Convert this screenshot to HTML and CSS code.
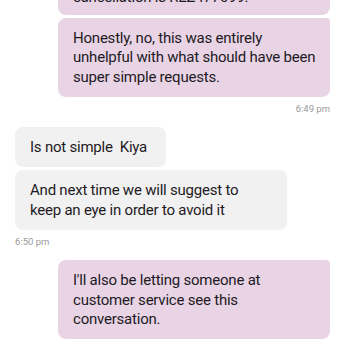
FILE: index.html
```html
<!DOCTYPE html>
<html>
<head>
<meta charset="utf-8">
<link rel="stylesheet" href="styles.css">
</head>
<body>
<div class="chat">
  <div class="msg sent first">Thanks, your reference for the cancellation is REZ477099.</div>
  <div class="msg sent next">Honestly, no, this was entirely unhelpful with what should have been super simple requests.</div>
  <div class="time right">6:49 pm</div>
  <div class="msg recv">Is not simple&nbsp; Kiya&nbsp;</div>
  <div class="msg recv">And next time we will suggest to keep an eye in order to avoid it</div>
  <div class="time left">6:50 pm</div>
  <div class="msg sent lone">I'll also be letting someone at customer service see this conversation.</div>
</div>
</body>
</html>
```
FILE: styles.css
```css
html, body {
  margin: 0;
  padding: 0;
  background: #ffffff;
  overflow: hidden;
}
body {
  width: 348px;
  height: 348px;
  font-family: Roboto, "Noto Sans", sans-serif;
  color: #1e1b1f;
}
.chat {
  display: flex;
  flex-direction: column;
  gap: 3px;
  margin-top: -42px;
  padding: 0 18px 0 15px;
}
.msg {
  font-size: 15px;
  line-height: 19.4px;
  letter-spacing: -0.22px;
  padding: 11px 15px 10px;
  border-radius: 8px;
  box-sizing: border-box;
  max-width: 272px;
}
.sent {
  background: #e9d4e6;
  align-self: flex-end;
  width: 272px;
  padding-right: 11px;
}
.sent.first {
  padding-bottom: 7px;
}
.sent.next,
.sent.lone {
  border-top-right-radius: 4px;
}
.recv {
  background: #f1f1f1;
  align-self: flex-start;
}
.time {
  font-size: 9.5px;
  line-height: 14px;
  color: #9a9a9a;
  margin: 2px 0 8px;
}
.time.right {
  align-self: flex-end;
}
.time.left {
  align-self: flex-start;
}
```
